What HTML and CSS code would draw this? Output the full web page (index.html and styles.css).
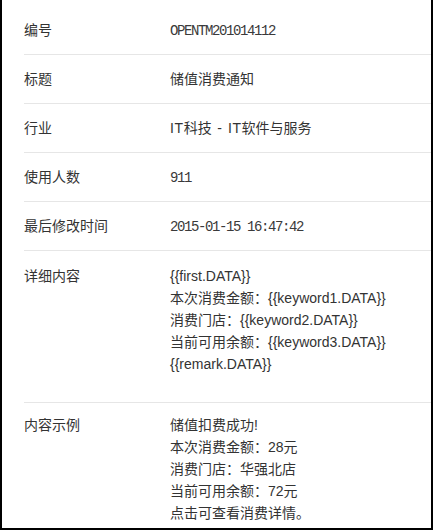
FILE: index.html
```html
<!DOCTYPE html>
<html lang="zh-CN">
<head>
<meta charset="utf-8">
<title>模板详情</title>
<link rel="stylesheet" href="styles.css">
</head>
<body>
<div class="frame">
  <div class="row simple">
    <div class="label">编号</div>
    <div class="value"><span class="mono">OPENTM201014112</span></div>
  </div>
  <div class="row simple">
    <div class="label">标题</div>
    <div class="value">储值消费通知</div>
  </div>
  <div class="row simple">
    <div class="label">行业</div>
    <div class="value"><span class="latin">IT</span>科技<span class="latin wide"> - IT</span>软件与服务</div>
  </div>
  <div class="row simple">
    <div class="label">使用人数</div>
    <div class="value"><span class="mono">911</span></div>
  </div>
  <div class="row simple">
    <div class="label">最后修改时间</div>
    <div class="value"><span class="mono">2015-01-15 16:47:42</span></div>
  </div>
  <div class="row block detail">
    <div class="label">详细内容</div>
    <div class="value lines">
      <div>{{first.DATA}}</div>
      <div>本次消费金额：{{keyword1.DATA}}</div>
      <div>消费门店：{{keyword2.DATA}}</div>
      <div>当前可用余额：{{keyword3.DATA}}</div>
      <div>{{remark.DATA}}</div>
    </div>
  </div>
  <div class="row block example">
    <div class="label">内容示例</div>
    <div class="value lines">
      <div>储值扣费成功!</div>
      <div>本次消费金额：28元</div>
      <div>消费门店：华强北店</div>
      <div>当前可用余额：72元</div>
      <div>点击可查看消费详情。</div>
    </div>
  </div>
</div>
</body>
</html>
```

FILE: styles.css
```css
html, body {
  margin: 0;
  padding: 0;
  height: 530px;
  background: #fff;
}
body {
  font-family: "Liberation Sans", "Noto Sans CJK SC", sans-serif;
  font-size: 14px;
  color: #333;
}
.frame {
  box-sizing: border-box;
  height: 530px;
  width: 433px;
  border-left: 2px solid #000;
  border-right: 2px solid #000;
  border-bottom: 2px solid #000;
  padding: 6px 0 0 22px;
  overflow: hidden;
}
.row {
  display: flex;
  border-bottom: 1px solid #e6e6e6;
}
.row.simple {
  height: 48px;
  align-items: center;
}
.label {
  width: 146px;
  flex: none;
  color: #333;
  line-height: 22px;
}
.value {
  color: #333;
  line-height: 22px;
}
.mono {
  font-family: "Liberation Mono", monospace;
  font-size: 14px;
  letter-spacing: -1.4px;
  color: #3a3a3a;
}
.latin {
  font-family: "Liberation Sans", sans-serif;
  letter-spacing: 0.6px;
}
.latin.wide {
  word-spacing: 1px;
}
.row.block {
  align-items: flex-start;
}
.row.detail {
  padding: 14px 0 27px;
}
.row.example {
  padding: 11px 0 0;
  border-bottom: none;
}
```
